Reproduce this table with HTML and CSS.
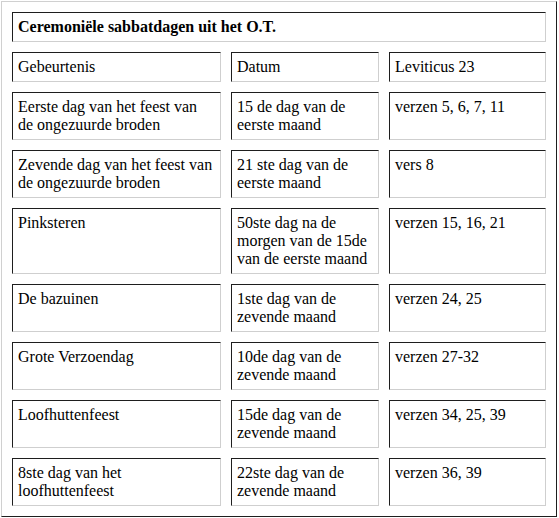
FILE: index.html
```html
<!DOCTYPE html>
<html lang="nl">
<head>
<meta charset="utf-8">
<title>Ceremoniële sabbatdagen</title>
<link rel="stylesheet" href="styles.css">
</head>
<body>
<table class="sabbat">
  <colgroup>
    <col class="c1">
    <col class="c2">
    <col class="c3">
  </colgroup>
  <tr>
    <td class="title" colspan="3">Ceremoniële sabbatdagen uit het O.T.</td>
  </tr>
  <tr>
    <td>Gebeurtenis</td>
    <td>Datum</td>
    <td>Leviticus 23</td>
  </tr>
  <tr>
    <td>Eerste dag van het feest van de ongezuurde broden</td>
    <td>15 de dag van de eerste maand</td>
    <td>verzen 5, 6, 7, 11</td>
  </tr>
  <tr>
    <td>Zevende dag van het feest van de ongezuurde broden</td>
    <td>21 ste dag van de eerste maand</td>
    <td>vers 8</td>
  </tr>
  <tr>
    <td>Pinksteren</td>
    <td>50ste dag na de morgen van de 15de van de eerste maand</td>
    <td>verzen 15, 16, 21</td>
  </tr>
  <tr>
    <td>De bazuinen</td>
    <td>1ste dag van de zevende maand</td>
    <td>verzen 24, 25</td>
  </tr>
  <tr>
    <td>Grote Verzoendag</td>
    <td>10de dag van de zevende maand</td>
    <td>verzen 27-32</td>
  </tr>
  <tr>
    <td>Loofhuttenfeest</td>
    <td>15de dag van de zevende maand</td>
    <td>verzen 34, 25, 39</td>
  </tr>
  <tr>
    <td>8ste dag van het loofhuttenfeest</td>
    <td>22ste dag van de zevende maand</td>
    <td>verzen 36, 39</td>
  </tr>
</table>
</body>
</html>
```

FILE: styles.css
```css
html, body {
  background: #ffffff;
}
body {
  margin: 1px 0 0 1px;
  font-family: "Times New Roman", "Liberation Serif", serif;
  font-size: 16px;
  line-height: 18px;
  color: #000000;
}
.sabbat {
  width: 556px;
  border-collapse: separate;
  border-spacing: 10px;
  border-style: solid;
  border-width: 1px;
  border-color: #d0d0d0 #1e1e1e #1e1e1e #d0d0d0;
  table-layout: fixed;
  font-family: "Times New Roman", "Liberation Serif", serif;
  font-size: 16px;
}
.sabbat td {
  padding: 5px;
  vertical-align: top;
  border-style: solid;
  border-width: 1px;
  border-color: #1e1e1e #cfcfcf #cfcfcf #1e1e1e;
  text-align: left;
  font-family: "Times New Roman", "Liberation Serif", serif;
  font-weight: 400;
}
.sabbat .title {
  font-weight: 700;
}
.c1 { width: 209px; }
.c2 { width: 148px; }
.c3 { width: 157px; }
```
